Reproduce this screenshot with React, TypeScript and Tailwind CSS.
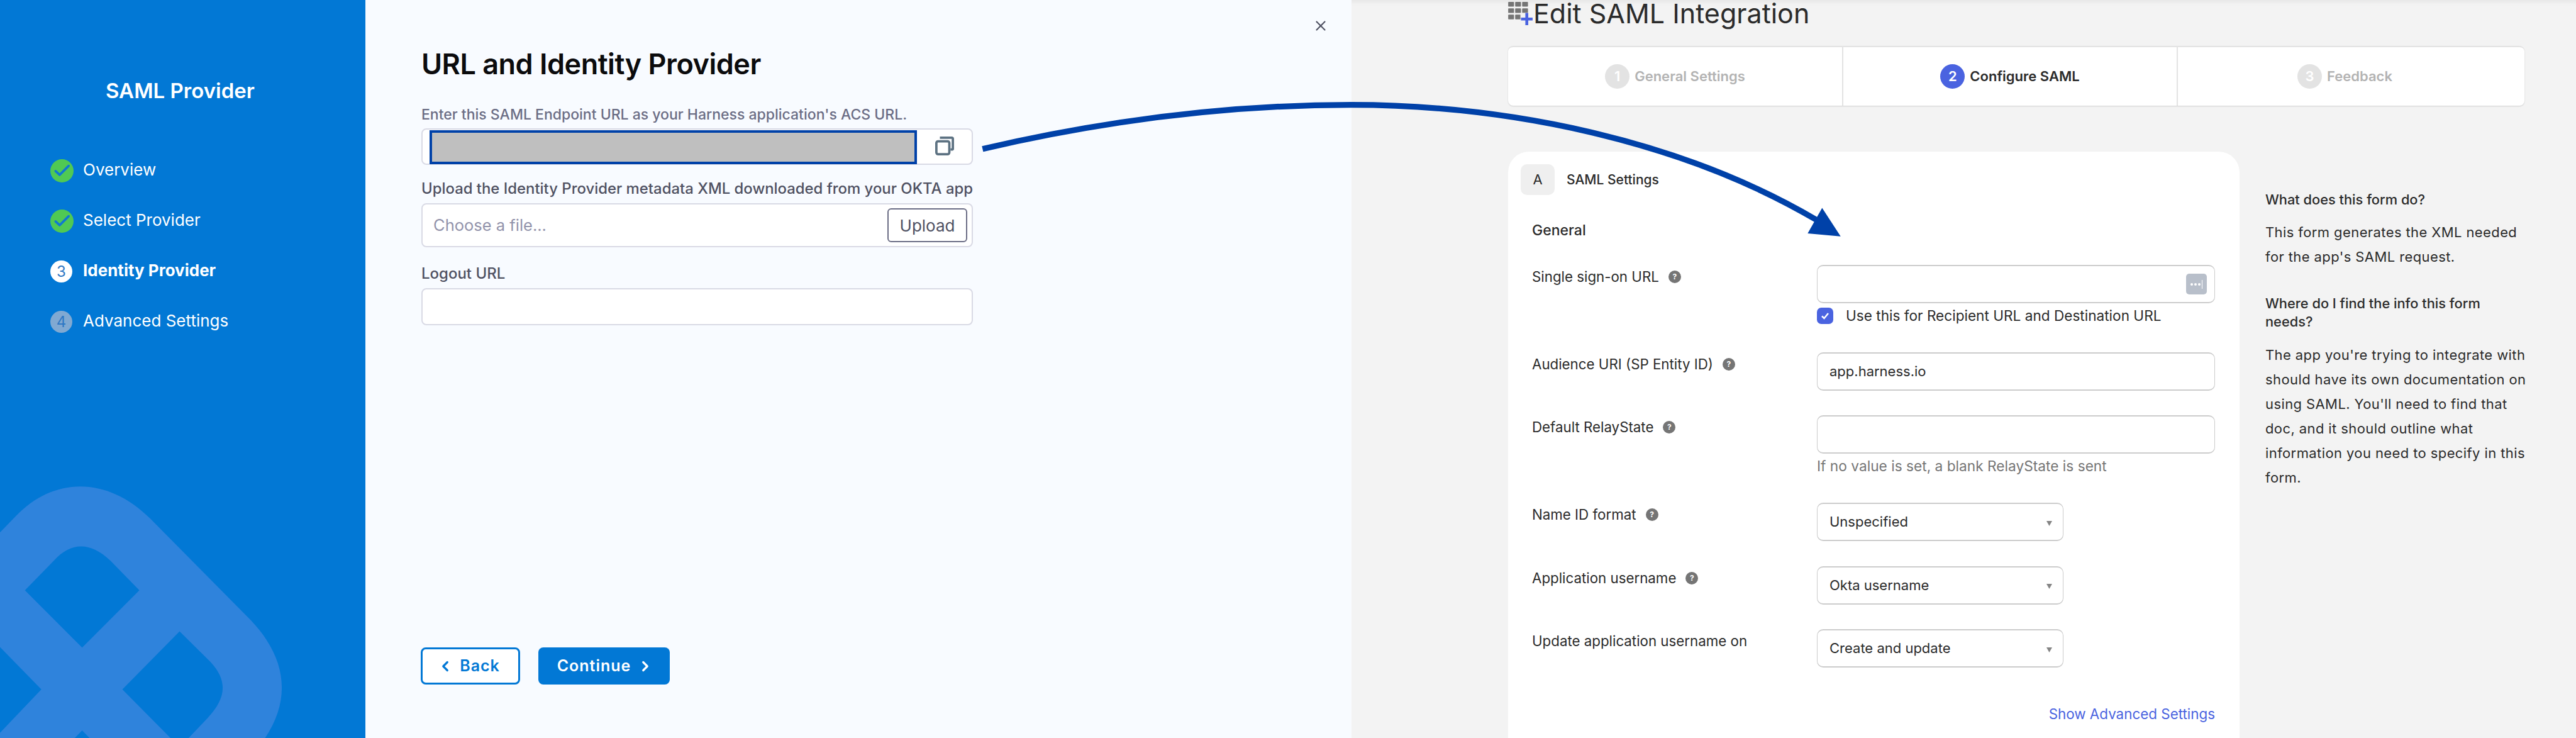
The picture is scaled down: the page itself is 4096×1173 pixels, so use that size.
import { X, ChevronLeft, ChevronRight } from "lucide-react";

const font = "font-['Inter','Liberation_Sans',sans-serif]";

function StepCheck() {
  return (
    <svg viewBox="0 0 40 40" className="w-[37px] h-[37px] shrink-0">
      <circle cx="20" cy="20" r="20" fill="#50c953" />
      <path d="M9 20.5l7 6.5L31.5 11.5" fill="none" stroke="#0f78d2" strokeWidth="4" strokeLinecap="round" strokeLinejoin="round" />
    </svg>
  );
}

function SidebarLogo() {
  return (
    <svg viewBox="0 0 645 1274" preserveAspectRatio="none" className="absolute inset-0 w-full h-full">
      <path
        fillRule="evenodd"
        fill="#2f83dc"
        d="M0 919 L28 891 C95 822 190 822 265 895 L443 1071 C505 1135 515 1205 468 1274 L0 1274 Z
           M44 1019 L95 968 C125 935 160 935 195 968 L246 1019 L145 1118 Z
           M317 1090 L372 1143 C402 1175 400 1205 366 1240 L333 1274 L301 1274 L216 1190 Z
           M0 1117 L73 1190 L0 1265 Z
           M145 1261 L132 1274 L158 1274 Z"
      />
    </svg>
  );
}

function Sidebar() {
  return (
    <div className="relative w-[581px] shrink-0 bg-[#0278d5] text-white overflow-hidden">
      <SidebarLogo />
      <div className="relative pt-[124px]">
        <div className="pl-[168px] h-[40px] leading-[40px] text-[33px] font-semibold">SAML Provider</div>
        <div className="mt-[89px] pl-[80px] flex flex-col gap-[43px] text-[26px]">
          <div className="flex items-center h-[37px] gap-[15px]">
            <StepCheck />
            <span className="-mt-[4px]">Overview</span>
          </div>
          <div className="flex items-center h-[37px] gap-[15px]">
            <StepCheck />
            <span className="-mt-[4px]">Select Provider</span>
          </div>
          <div className="flex items-center h-[37px] gap-[17px]">
            <div className="w-[35px] h-[35px] rounded-full bg-white text-[#2f78c4] flex items-center justify-center text-[24px]">3</div>
            <span className="-mt-[4px] font-bold">Identity Provider</span>
          </div>
          <div className="flex items-center h-[37px] gap-[17px]">
            <div className="w-[35px] h-[35px] rounded-full bg-[#80a9d2] text-[#2f78c4] flex items-center justify-center text-[24px]">4</div>
            <span className="-mt-[4px]">Advanced Settings</span>
          </div>
        </div>
      </div>
    </div>
  );
}

function CopyIcon() {
  return (
    <svg viewBox="0 0 32 32" className="w-[30px] h-[30px] -mt-[4px]" fill="none" stroke="#5d7282" strokeWidth="4">
      <rect x="2" y="8" width="22" height="22" rx="3" />
      <path d="M8 2H28Q30 2 30 4V21Q30 22 28 22H26" />
    </svg>
  );
}

function Panel() {
  return (
    <div className="relative w-[1568px] shrink-0 bg-[#f8fbff] pl-[89px] pt-[77px] pb-[85px] flex flex-col">
      <button className="absolute left-[1506px] top-[28px] text-[#4f5162]">
        <X size={26} strokeWidth={2} />
      </button>
      <h1 className="h-[50px] leading-[50px] text-[45px] font-semibold text-[#0b0b0d] tracking-[-0.5px]">URL and Identity Provider</h1>
      <div className="w-[877px]">
        <div className="mt-[43px] h-[24px] leading-[24px] text-[23px] font-medium text-[#6b6d85] whitespace-nowrap">
          Enter this SAML Endpoint URL as your Harness application's ACS URL.
        </div>
        <div className="mt-[10px] h-[58px] rounded-[8px] border-2 border-[#d9dae5] bg-white pl-[11px] pt-[1px] flex">
          <div className="w-[775px] h-[54px] border-4 border-[#0041a8] bg-[#bfbfbf]" />
          <div className="flex-1 flex items-center justify-center">
            <CopyIcon />
          </div>
        </div>
        <div className="mt-[26px] h-[24px] leading-[24px] text-[23.9px] font-medium text-[#4f5162] whitespace-nowrap">
          Upload the Identity Provider metadata XML downloaded from your OKTA app
        </div>
        <div className="mt-[11px] h-[70px] rounded-[8px] border-2 border-[#d9dae5] bg-white pl-[17px] pr-[7px] flex items-center justify-between">
          <span className="text-[25.5px] text-[#9293ab]">Choose a file...</span>
          <div className="w-[127px] h-[54px] rounded-[6px] border-2 border-[#6b6d85] flex items-center justify-center text-[26px] text-[#4f5162]">
            Upload
          </div>
        </div>
        <div className="mt-[30px] h-[24px] leading-[24px] text-[24px] font-medium text-[#4f5162]">Logout URL</div>
        <div className="mt-[11px] h-[59px] rounded-[8px] border-2 border-[#d9dae5] bg-white" />
      </div>
      <div className="mt-auto flex gap-[29px] -ml-[1px]">
        <button className="w-[158px] h-[59px] rounded-[8px] border-[3px] border-[#0278d5] bg-white text-[#0278d5] font-semibold text-[25px] tracking-[1px] flex items-center justify-center gap-[10px]">
          <ChevronLeft size={26} strokeWidth={3} className="-ml-[6px]" />
          Back
        </button>
        <button className="w-[209px] h-[59px] rounded-[8px] bg-[#0278d5] text-white font-semibold text-[25px] tracking-[1px] flex items-center justify-center gap-[10px]">
          Continue
          <ChevronRight size={26} strokeWidth={3} className="-mr-[4px]" />
        </button>
      </div>
    </div>
  );
}

function Help() {
  return (
    <span className="w-[20px] h-[20px] rounded-full bg-[#757575] text-white text-[12px] font-bold flex items-center justify-center">?</span>
  );
}

function FormLabel({ text, help }: { text: string; help?: boolean }) {
  return (
    <div className="w-[453px] shrink-0 pt-[7px] h-[31px] flex items-center text-[22.3px] text-[#2b2b2b]">
      <span>{text}</span>
      {help && <span className="ml-[15px]"><Help /></span>}
    </div>
  );
}

function TextBox({ value, children }: { value?: string; children?: React.ReactNode }) {
  return (
    <div className="w-[633px] h-[61px] rounded-[10px] border border-[#cccccc] border-t-[2px] border-b-[2px] bg-white pl-[19px] pr-[24px] flex items-center justify-between text-[22px] text-[#2b2b2b]">
      <span>{value}</span>
      {children}
    </div>
  );
}

function SelectRow({ label, value, help }: { label: string; value: string; help?: boolean }) {
  return (
    <div className="flex">
      <FormLabel text={label} help={help} />
      <div className="w-[392px] h-[61px] rounded-[10px] border border-[#cccccc] border-t-[2px] border-b-[2px] bg-white pl-[19px] pr-[17px] flex items-center justify-between text-[22px] text-[#2b2b2b]">
        <span>{value}</span>
        <svg viewBox="0 0 9 8" className="w-[9px] h-[8px] mt-[4px]">
          <polygon points="0,0 9,0 4.5,8" fill="#858585" />
        </svg>
      </div>
    </div>
  );
}

function TitleIcon() {
  return (
    <svg viewBox="0 0 43 40" className="w-[40px] h-[37px] shrink-0">
      {[0, 12, 24].map((x) =>
        [0, 11, 22].map((y) => <rect key={`${x}-${y}`} x={x} y={y} width="10" height="8" rx="1" fill="#757575" />)
      )}
      <rect x="21" y="19" width="20" height="20" fill="#f3f3f3" />
      <path d="M32 19V40M22 29.5H42" stroke="#4a63e0" strokeWidth="5" />
    </svg>
  );
}

function WizardStep({ num, label, active, className }: { num: number; label: string; active?: boolean; className: string }) {
  return (
    <div className={`${className} flex items-center justify-center gap-[8px] text-[22px] font-semibold ${active ? "text-[#2b2b2b]" : "text-[#b3b3b3]"}`}>
      <span className={`w-[39px] h-[39px] rounded-full text-white flex items-center justify-center ${active ? "bg-[#4a63e0]" : "bg-[#e3e3e3]"}`}>{num}</span>
      <span>{label}</span>
    </div>
  );
}

function RightSide() {
  return (
    <div className="flex-1 min-w-0 bg-[#f3f3f3] shadow-[inset_0_10px_8px_-8px_rgba(0,0,0,0.07)] pl-[249px] flex flex-col overflow-hidden">
      <div className="h-[43px] flex items-center">
        <TitleIcon />
        <span className="text-[43px] leading-[40px] text-[#2b2b2b] -mt-[1px]">Edit SAML Integration</span>
      </div>
      <div className="mt-[30px] w-[1616px] h-[95px] bg-white rounded-[8px] border-t-2 border-[#e3e3e3] shadow-[0_1px_2px_rgba(0,0,0,0.15)] flex">
        <WizardStep num={1} label="General Settings" className="w-[533px] border-r-2 border-[#e3e3e3]" />
        <WizardStep num={2} label="Configure SAML" active className="w-[532px] border-r-2 border-[#e3e3e3]" />
        <WizardStep num={3} label="Feedback" className="flex-1 pr-[20px]" />
      </div>
      <div className="mt-[73px] flex flex-1 min-h-0">
        <div className="w-[1163px] shrink-0 bg-white rounded-t-[33px] pt-[20px] pl-[20px] pr-[39px]">
          <div className="flex items-center gap-[19px]">
            <div className="w-[54px] h-[49px] rounded-[10px] bg-[#efefef] flex items-center justify-center text-[22px] text-[#2b2b2b]">A</div>
            <span className="text-[21px] font-medium text-[#2b2b2b]">SAML Settings</span>
          </div>
          <div className="pl-[18px]">
            <div className="mt-[42px] h-[28px] leading-[28px] text-[23px] font-medium text-[#2b2b2b]">General</div>
            <div className="mt-[41px] flex">
              <FormLabel text="Single sign-on URL" help />
              <div>
                <TextBox>
                  <span className="w-[33px] h-[33px] -mr-[12px] rounded-[5px] bg-[#b8bfca] flex items-center justify-center gap-[2px]">
                    <span className="w-[4px] h-[4px] rounded-full bg-white" />
                    <span className="w-[4px] h-[4px] rounded-full bg-white" />
                    <span className="w-[4px] h-[4px] rounded-full bg-white" />
                    <span className="w-[1px] h-[14px] bg-white" />
                  </span>
                </TextBox>
                <div className="mt-[7px] flex items-center gap-[20px] h-[26px] text-[22.6px] text-[#2b2b2b]">
                  <span className="w-[26px] h-[26px] rounded-[7px] bg-[#4a63e0] flex items-center justify-center">
                    <svg viewBox="0 0 16 16" className="w-[16px] h-[16px]" fill="none" stroke="white" strokeWidth="2.5">
                      <path d="M3 8.5l3.5 3.5L13 4" />
                    </svg>
                  </span>
                  Use this for Recipient URL and Destination URL
                </div>
              </div>
            </div>
            <div className="mt-[45px] flex">
              <FormLabel text="Audience URI (SP Entity ID)" help />
              <TextBox value="app.harness.io" />
            </div>
            <div className="mt-[39px] flex">
              <FormLabel text="Default RelayState" help />
              <div>
                <TextBox />
                <div className="mt-[8px] h-[24px] leading-[24px] text-[22.7px] text-[#767676]">If no value is set, a blank RelayState is sent</div>
              </div>
            </div>
            <div className="mt-[46px] flex flex-col gap-[39.5px]">
              <SelectRow label="Name ID format" value="Unspecified" help />
              <SelectRow label="Application username" value="Okta username" help />
              <SelectRow label="Update application username on" value="Create and update" />
            </div>
            <div className="mt-[62px] h-[24px] leading-[24px] text-right text-[22.4px] text-[#4a63e0]">Show Advanced Settings</div>
          </div>
        </div>
        <div className="ml-[41px] w-[425px] pt-[62px] text-[#2b2b2b]">
          <div className="h-[28px] leading-[28px] text-[21.8px] font-medium">What does this form do?</div>
          <p className="mt-[19px] leading-[39px] text-[22px] tracking-[0.4px]">This form generates the XML needed for the app's SAML request.</p>
          <div className="mt-[40px] w-[390px] leading-[29px] text-[21.8px] font-medium">Where do I find the info this form needs?</div>
          <p className="mt-[19px] leading-[39px] text-[22px] tracking-[0.4px]">
            The app you're trying to integrate with should have its own documentation on using SAML. You'll need to find that doc, and it should outline what information you need to specify in this form.
          </p>
        </div>
      </div>
    </div>
  );
}

function Arrow() {
  return (
    <svg viewBox="0 0 4449 1274" className="absolute inset-0 w-full h-full pointer-events-none">
      <path d="M1697 257 C1890 212 2100 181 2334 181 C2600 181 2900 240 3138 380" fill="none" stroke="#0041a8" strokeWidth="10" />
      <polygon points="3179,408 3147,359 3122,403" fill="#0041a8" />
    </svg>
  );
}

export default function App() {
  return (
    <div className={`relative w-[4096px] h-[1173px] flex overflow-hidden ${font}`}>
      <Sidebar />
      <Panel />
      <RightSide />
      <Arrow />
    </div>
  );
}
